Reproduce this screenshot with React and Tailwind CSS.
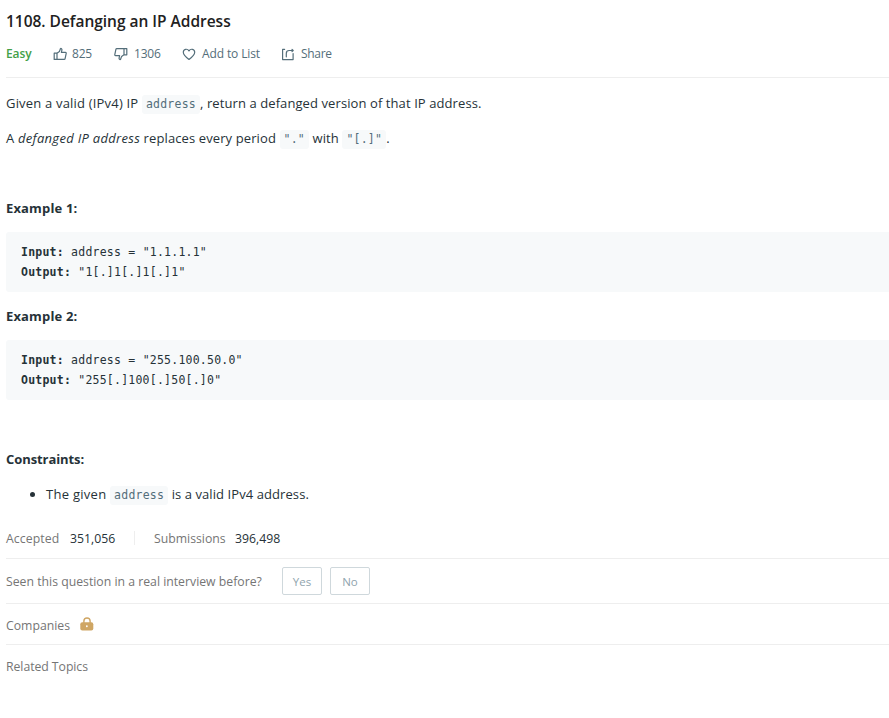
import React from "react";

function Code({ children }) {
  return (
    <code className="inline-block h-[19px] rounded-[3px] bg-[#f7f9fa] px-1 font-['DejaVu_Sans_Mono',monospace] text-[11.5px] leading-[19px] tracking-[0.23px] text-[#546e7a]">
      {children}
    </code>
  );
}

function Example({ n, input, output }) {
  return (
    <>
      <p className="h-[21px] font-bold leading-[21px] tracking-[0.15px]">Example {n}:</p>
      <pre className="mt-[13px] mb-[14px] h-[60px] rounded-l-[3px] bg-[#f7f9fa] px-[15px] py-[10px] font-['DejaVu_Sans_Mono',monospace] text-[11.5px] leading-5 tracking-[0.23px] text-[#263238]">
        <strong>Input:</strong> address = {input}
        {"\n"}
        <strong>Output:</strong> {output}
      </pre>
    </>
  );
}

const stroke = {
  fill: "none",
  stroke: "currentColor",
  strokeWidth: 1.2,
  strokeLinejoin: "round",
  strokeLinecap: "round",
};

function Thumb({ className = "" }) {
  return (
    <svg width="14" height="14" viewBox="0 0 14 14" className={className} {...stroke}>
      <path d="M1.2 6.2h2.8v6.2H1.2zM4 6.2 6.4 4.6 7.5 1.5c.9-.2 1.6.5 1.4 1.5l-.5 2.4h4.1c.5 0 .8.4.7.9l-1.1 5.4c-.1.5-.4.7-.9.7H4" />
    </svg>
  );
}

function Heart() {
  return (
    <svg width="14" height="14" viewBox="0 0 14 14" {...stroke}>
      <path d="M7 12.5C4.4 10.5 1.3 8 1.3 5.2c0-3.2 4-4 5.7-1.3 1.7-2.7 5.7-1.9 5.7 1.3 0 2.8-3.1 5.3-5.7 7.3z" />
    </svg>
  );
}

function ShareIcon() {
  return (
    <svg width="14" height="14" viewBox="0 0 14 14" {...stroke}>
      <path d="M3.6 2.4H1.6v10.2h10.5V6.6M5.3 9.8V6.4c0-1.9 1-2.9 2.9-2.9h3.8M11 2.3l1.2 1.2L11 4.7" />
    </svg>
  );
}

function Lock() {
  return (
    <svg width="14" height="14" viewBox="0 0 14 14">
      <path d="M3.9 6.2V4.1a3.1 3.1 0 0 1 6.2 0v2.1" fill="none" stroke="#cfa664" strokeWidth="1.4" />
      <rect x=".3" y="5.3" width="13" height="8.3" rx="2" fill="#cfa664" />
      <rect x="6" y="8.2" width="1.7" height="2" rx=".7" fill="#fff" />
    </svg>
  );
}

export default function App() {
  return (
    <main className="h-[718px] overflow-hidden bg-white pl-[6px] font-['Open_Sans',sans-serif] text-[13px] text-[#263238]">
      <h1 className="pt-[9px] pb-px text-[15.5px] font-semibold leading-6 tracking-[-0.02px] text-[#212121]">
        1108. Defanging an IP Address
      </h1>
      <div className="flex h-[44px] items-start border-b border-[#eeeeee] pt-[10px] text-[12px] leading-5 text-[#546e7a]">
        <span className="w-[47px] font-semibold tracking-[-0.1px] text-[#43a047]">Easy</span>
        <span className="flex w-[61px] items-center gap-[5px] tracking-[-0.2px]"><Thumb />825</span>
        <span className="flex w-[68px] items-center gap-[6px] tracking-[-0.2px]"><Thumb className="rotate-180" />1306</span>
        <span className="flex w-[99px] items-center gap-[6px] tracking-[-0.12px]"><Heart />Add to List</span>
        <span className="flex items-center gap-[6px] tracking-[-0.3px]"><ShareIcon />Share</span>
      </div>
      <article className="pt-[15px] leading-[21px] tracking-[0.12px]">
        <p className="mb-[14px] h-[21px] whitespace-nowrap">
          <span className="tracking-[0.19px]">Given a valid (IPv4) IP </span><Code>address</Code><span className="tracking-[0.09px]">, return a defanged version of that IP address.</span>
        </p>
        <p className="mb-[49px] h-[21px] whitespace-nowrap">
          <span className="tracking-[0.19px]">A <em className="tracking-[0.3px]">defanged IP address</em><span className="tracking-[0.11px]"> replaces every period </span></span><Code>"."</Code> with <Code>"[.]"</Code>.
        </p>
        <Example n={1} input={'"1.1.1.1"'} output={'"1[.]1[.]1[.]1"'} />
        <Example n={2} input={'"255.100.50.0"'} output={'"255[.]100[.]50[.]0"'} />
        <p className="mt-[49px] mb-[14px] h-[21px] font-bold tracking-[-0.08px]">Constraints:</p>
        <ul className="list-disc pl-10">
          <li className="h-[21px]"><span className="tracking-[0.28px]">The given </span><Code>address</Code><span className="tracking-[0.08px]"> is a valid IPv4 address.</span></li>
        </ul>
      </article>
      <div className="flex h-[54px] items-start border-b border-[#eeeeee] pt-[24px] text-[12.25px] leading-5">
        <span className="w-16 tracking-[0.08px] text-[#757575]">Accepted</span>
        <span className="w-16">351,056</span>
        <span className="mt-[2px] h-[14px] w-[20px] border-l border-[#eeeeee]" />
        <span className="w-[81px] text-[#757575]">Submissions</span>
        <span>396,498</span>
      </div>
      <div className="flex h-[45px] items-center border-b border-[#eeeeee] text-[12.25px] text-[#757575]">
        <span className="w-[276px] pt-[2px]">Seen this question in a real interview before?</span>
        <button className="mr-2 h-7 w-10 rounded-[2px] border border-[#cfd8dc] pt-px text-[11.5px] text-[#90a4ae]">Yes</button>
        <button className="h-7 w-10 rounded-[2px] border border-[#cfd8dc] pt-px text-[11.5px] text-[#90a4ae]">No</button>
      </div>
      <div className="flex h-[41px] items-center border-b border-[#eeeeee] text-[12.25px] text-[#757575]">
        <span className="w-[74px] pt-[4px]">Companies</span>
        <Lock />
      </div>
      <div className="flex h-[42px] items-center pt-[3px] text-[12.25px] tracking-[-0.05px] text-[#757575]">Related Topics</div>
    </main>
  );
}
